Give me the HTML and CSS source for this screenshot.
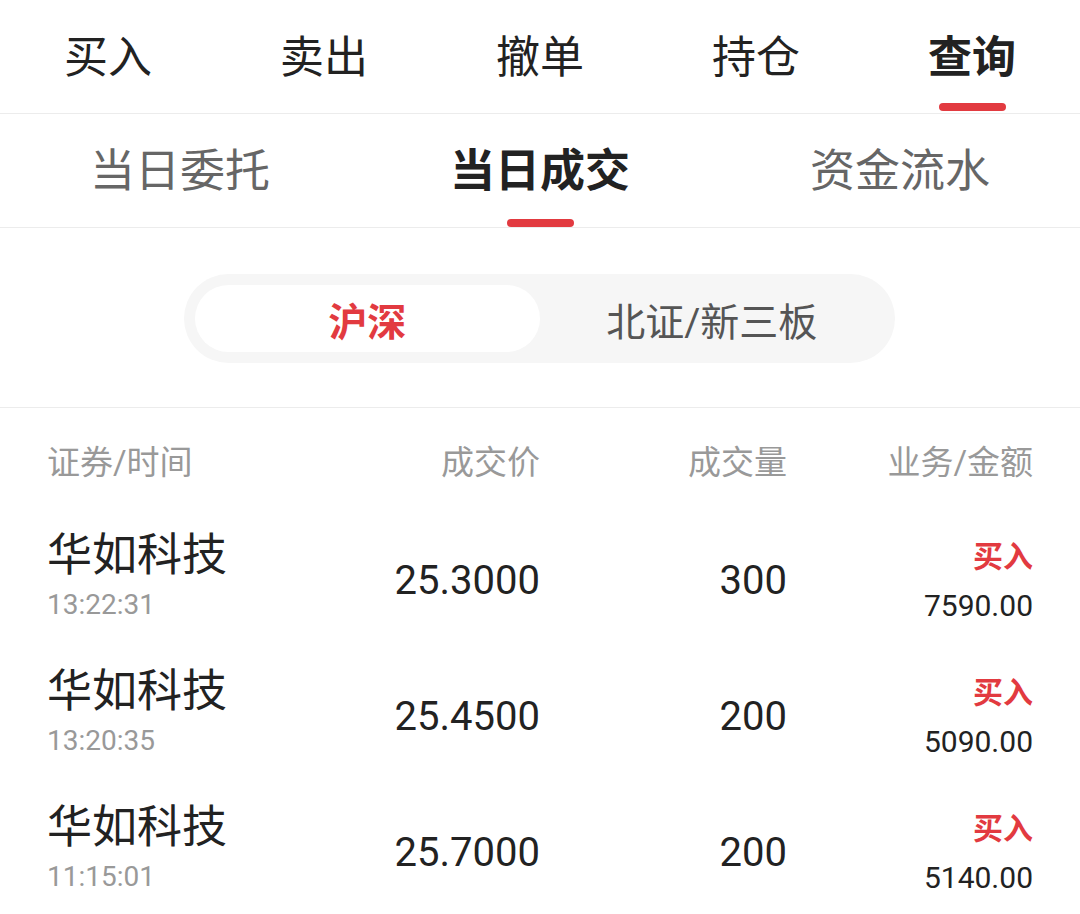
FILE: index.html
```html
<!DOCTYPE html>
<html lang="zh-CN">
<head>
    <meta charset="UTF-8">
    <meta name="viewport" content="width=device-width, initial-scale=1.0">
    <title>查询 - 当日成交</title>
    <link rel="stylesheet" href="styles.css">
</head>
<body>
    <div class="page">
        <nav class="main-tabs">
            <div class="main-tab">买入</div>
            <div class="main-tab">卖出</div>
            <div class="main-tab">撤单</div>
            <div class="main-tab">持仓</div>
            <div class="main-tab active">查询</div>
        </nav>

        <nav class="sub-tabs">
            <div class="sub-tab">当日委托</div>
            <div class="sub-tab active">当日成交</div>
            <div class="sub-tab">资金流水</div>
        </nav>

        <div class="market-bar">
            <div class="segment">
                <div class="segment-item active">沪深</div>
                <div class="segment-item">北证/新三板</div>
            </div>
        </div>

        <div class="deal-table">
            <div class="table-head">
                <div class="col-name">证券/时间</div>
                <div class="col-num">成交价</div>
                <div class="col-num">成交量</div>
                <div class="col-num">业务/金额</div>
            </div>

            <div class="deal-row">
                <div class="col-name">
                    <div class="stock-name">华如科技</div>
                    <div class="deal-time">13:22:31</div>
                </div>
                <div class="col-num big-num">25.3000</div>
                <div class="col-num big-num">300</div>
                <div class="col-num">
                    <div class="deal-type">买入</div>
                    <div class="deal-amount">7590.00</div>
                </div>
            </div>

            <div class="deal-row">
                <div class="col-name">
                    <div class="stock-name">华如科技</div>
                    <div class="deal-time">13:20:35</div>
                </div>
                <div class="col-num big-num">25.4500</div>
                <div class="col-num big-num">200</div>
                <div class="col-num">
                    <div class="deal-type">买入</div>
                    <div class="deal-amount">5090.00</div>
                </div>
            </div>

            <div class="deal-row">
                <div class="col-name">
                    <div class="stock-name">华如科技</div>
                    <div class="deal-time">11:15:01</div>
                </div>
                <div class="col-num big-num">25.7000</div>
                <div class="col-num big-num">200</div>
                <div class="col-num">
                    <div class="deal-type">买入</div>
                    <div class="deal-amount">5140.00</div>
                </div>
            </div>
        </div>
    </div>
</body>
</html>
```

FILE: styles.css
```css
body {
    margin: 0;
    background-color: #fff;
    font-family: Roboto, "Noto Sans CJK SC", sans-serif;
    color: #222;
    overflow: hidden;
}

.page {
    width: 1080px;
}

/* 顶部主导航 */
.main-tabs {
    display: flex;
    height: 113px;
    border-bottom: 1px solid #ececec;
}

.main-tab {
    flex: 1;
    position: relative;
    display: flex;
    justify-content: center;
    align-items: center;
    padding-bottom: 6px;
    font-size: 44px;
    color: #222;
}

.main-tab.active {
    font-weight: bold;
}

.main-tab.active::after,
.sub-tab.active::after {
    content: "";
    position: absolute;
    left: 50%;
    width: 67px;
    height: 8px;
    margin-left: -33px;
    border-radius: 4px;
    background-color: #e23a40;
}

.main-tab.active::after {
    bottom: 2px;
}

/* 二级导航 */
.sub-tabs {
    display: flex;
    height: 113px;
    border-bottom: 1px solid #ececec;
}

.sub-tab {
    flex: 1;
    position: relative;
    display: flex;
    justify-content: center;
    align-items: center;
    padding-bottom: 6px;
    font-size: 45px;
    color: #666;
}

.sub-tab.active {
    color: #222;
    font-weight: bold;
}

.sub-tab.active::after {
    bottom: 0;
}

/* 市场切换 */
.market-bar {
    display: flex;
    justify-content: center;
    padding: 46px 0 44px;
    border-bottom: 1px solid #ececec;
}

.segment {
    width: 689px;
    margin-left: -1px;
    padding: 11px;
    display: grid;
    grid-template-columns: 1fr 1fr;
    background-color: #f6f6f6;
    border-radius: 45px;
}

.segment-item {
    height: 67px;
    display: flex;
    justify-content: center;
    align-items: center;
    font-size: 39px;
    color: #555;
    border-radius: 34px;
}

.segment-item.active {
    background-color: #fff;
    color: #e23a40;
    font-weight: bold;
}

/* 成交列表 */
.deal-table {
    padding: 0 47px;
}

.table-head,
.deal-row {
    display: grid;
    grid-template-columns: 250px 243px 247px 246px;
    align-items: center;
}

.table-head {
    height: 104px;
    font-size: 33px;
    color: #999;
}

.deal-row {
    height: 136px;
}

.col-num {
    text-align: right;
}

.deal-row .col-name {
    padding-bottom: 9px;
}

.stock-name {
    font-size: 45px;
    line-height: 54px;
    color: #222;
}

.deal-time {
    margin-top: 5px;
    font-size: 28px;
    line-height: 34px;
    color: #999;
}

.big-num {
    font-size: 40px;
    color: #222;
}

.deal-type {
    font-size: 30px;
    line-height: 40px;
    font-weight: bold;
    color: #e23a40;
}

.deal-amount {
    margin-top: 11px;
    font-size: 30px;
    line-height: 36px;
    color: #222;
}
```
